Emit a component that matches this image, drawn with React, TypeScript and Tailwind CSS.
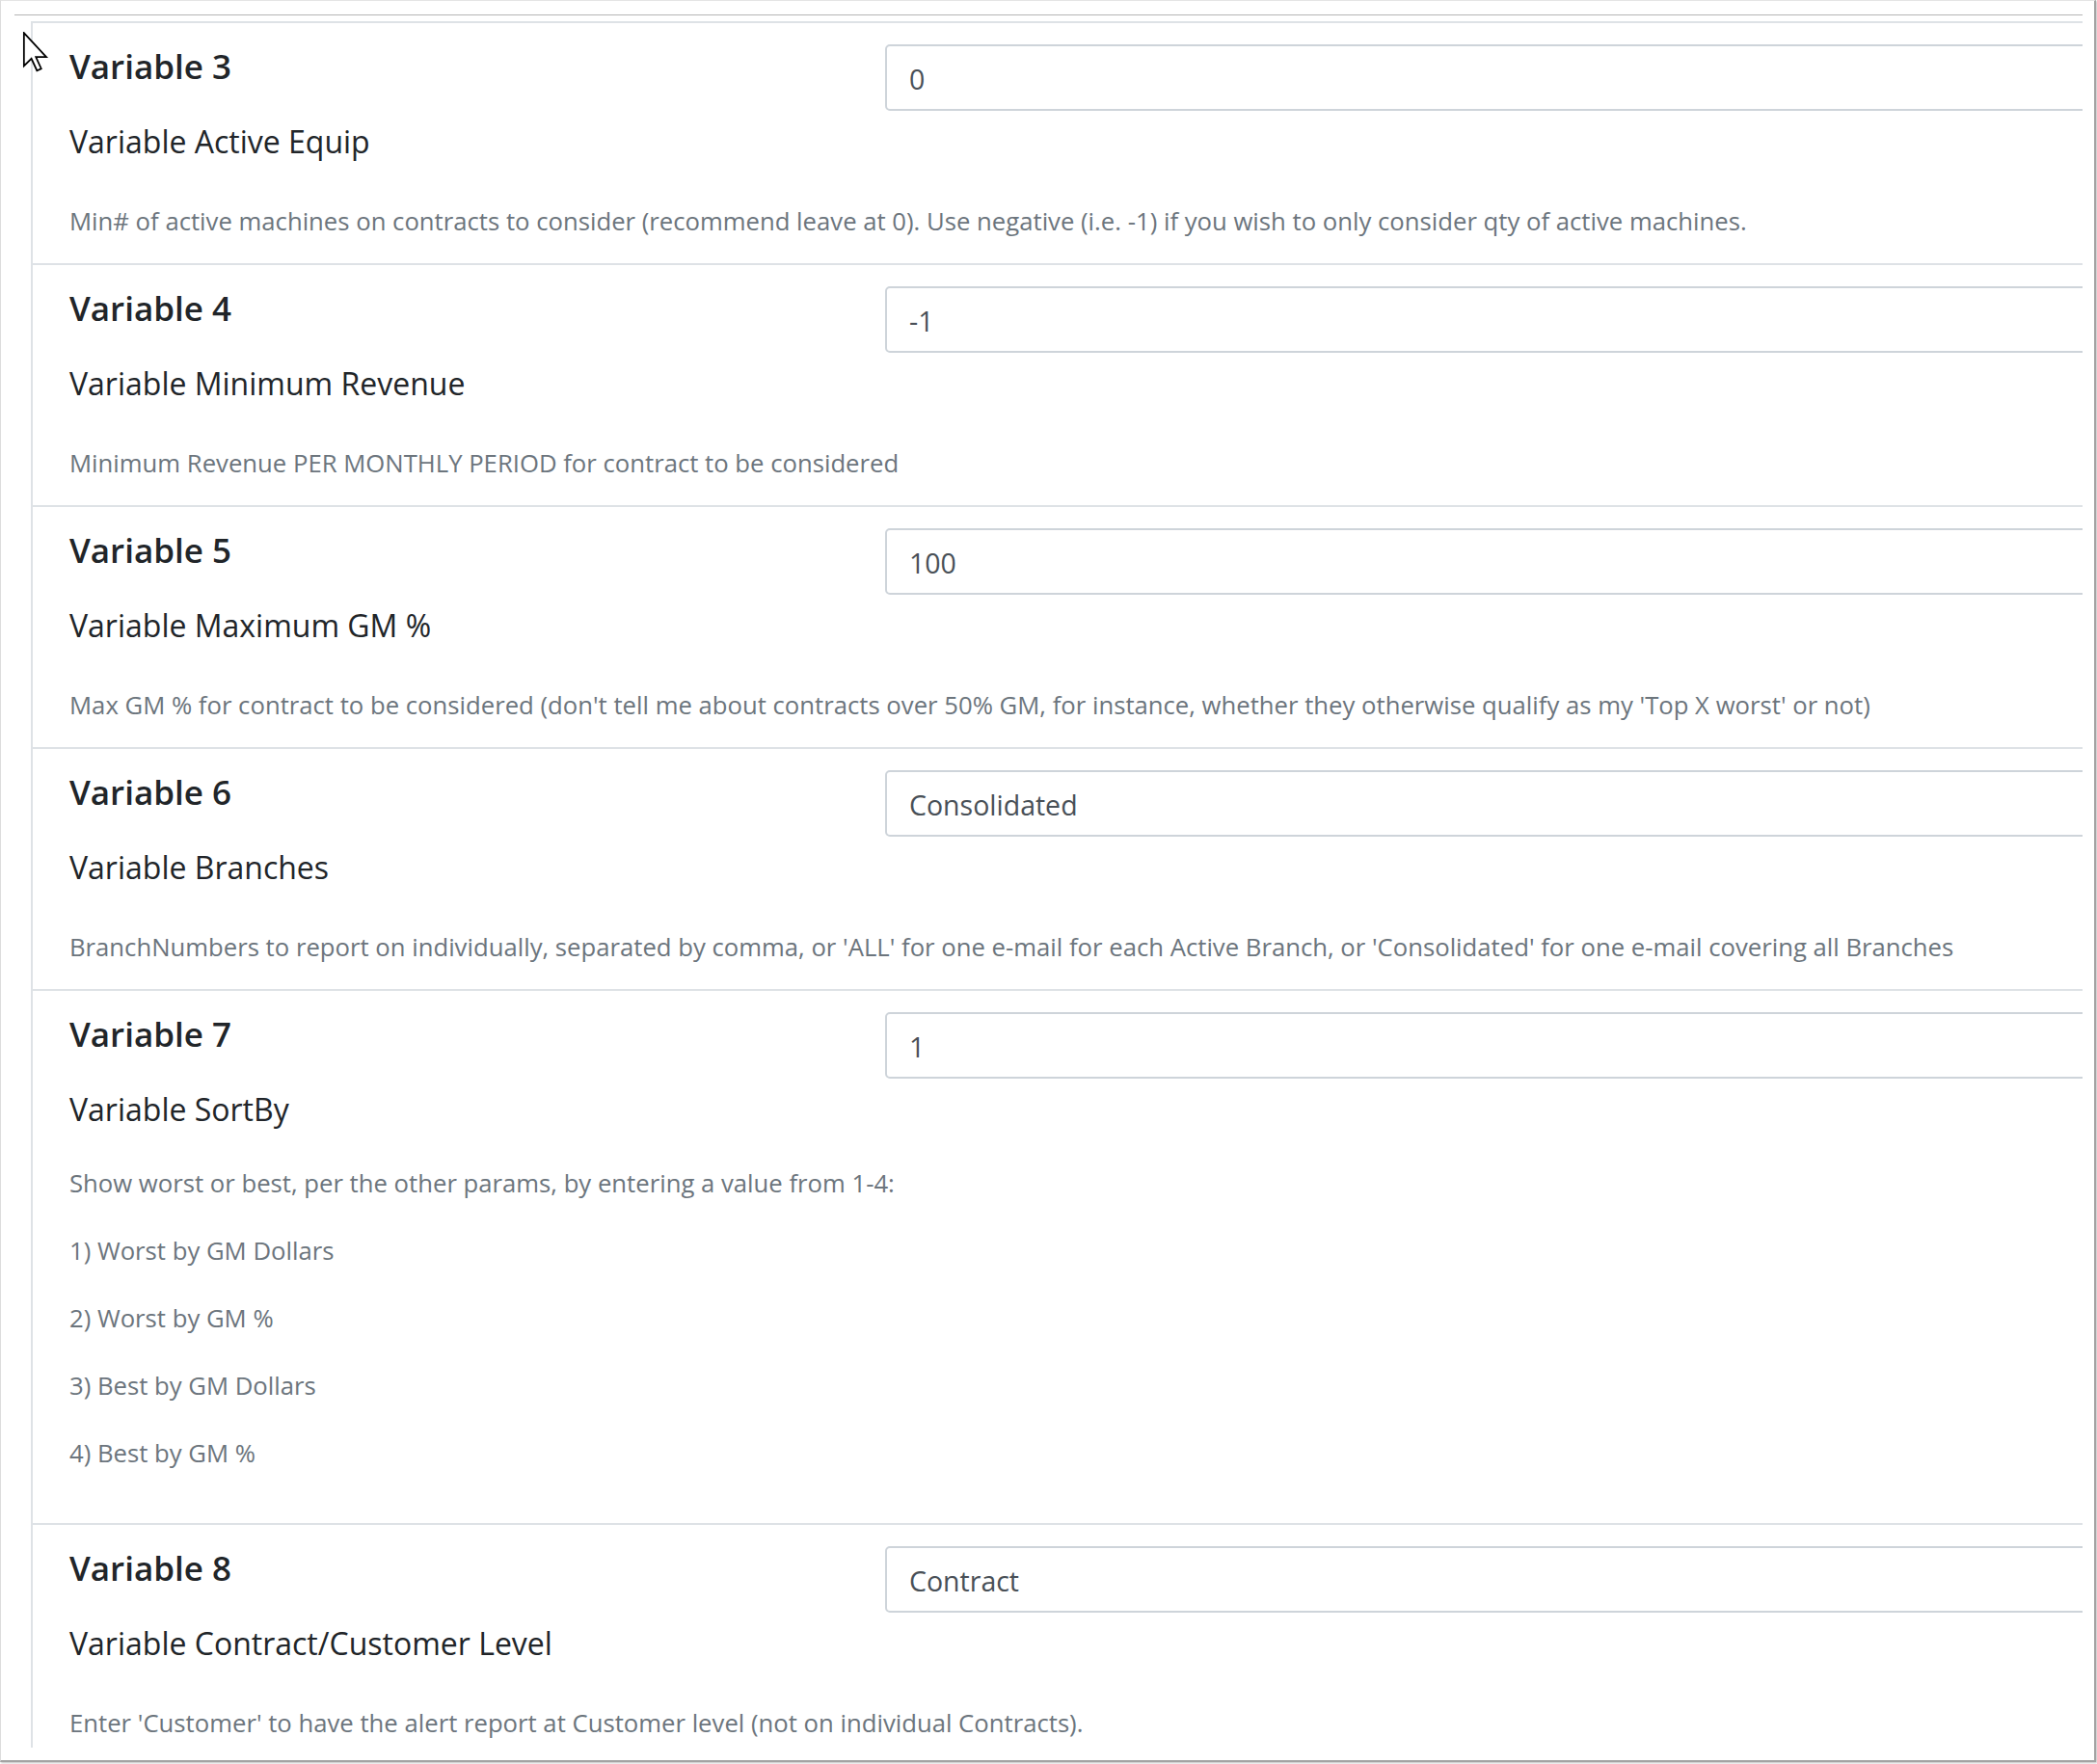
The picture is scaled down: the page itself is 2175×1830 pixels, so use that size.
import React from "react";

type Setting = {
  title: string;
  label: string;
  value: string;
  notes: string[];
};

const settings: Setting[] = [
  {
    title: "Variable 3",
    label: "Variable Active Equip",
    value: "0",
    notes: [
      "Min# of active machines on contracts to consider (recommend leave at 0). Use negative (i.e. -1) if you wish to only consider qty of active machines.",
    ],
  },
  {
    title: "Variable 4",
    label: "Variable Minimum Revenue",
    value: "-1",
    notes: ["Minimum Revenue PER MONTHLY PERIOD for contract to be considered"],
  },
  {
    title: "Variable 5",
    label: "Variable Maximum GM %",
    value: "100",
    notes: [
      "Max GM % for contract to be considered (don't tell me about contracts over 50% GM, for instance, whether they otherwise qualify as my 'Top X worst' or not)",
    ],
  },
  {
    title: "Variable 6",
    label: "Variable Branches",
    value: "Consolidated",
    notes: [
      "BranchNumbers to report on individually, separated by comma, or 'ALL' for one e-mail for each Active Branch, or 'Consolidated' for one e-mail covering all Branches",
    ],
  },
  {
    title: "Variable 7",
    label: "Variable SortBy",
    value: "1",
    notes: [
      "Show worst or best, per the other params, by entering a value from 1-4:",
      "1) Worst by GM Dollars",
      "2) Worst by GM %",
      "3) Best by GM Dollars",
      "4) Best by GM %",
    ],
  },
  {
    title: "Variable 8",
    label: "Variable Contract/Customer Level",
    value: "Contract",
    notes: [
      "Enter 'Customer' to have the alert report at Customer level (not on individual Contracts).",
    ],
  },
];

function Cursor() {
  return (
    <svg
      className="absolute left-[22px] top-[32px]"
      width="28"
      height="42"
      viewBox="0 0 12 19"
    >
      <path
        d="M0.5 0.5 L0.5 16 L4 12.6 L6.6 18.2 L8.6 17.3 L6.1 11.8 L11 11.8 Z"
        fill="#fff"
        stroke="#000"
        strokeWidth="0.8"
        strokeLinejoin="miter"
      />
    </svg>
  );
}

function SettingRow({ setting }: { setting: Setting }) {
  const multi = setting.notes.length > 1;
  return (
    <div className="border-b-2 border-[#dee2e6] pl-[38px] pt-[22px]">
      <div className="flex items-start">
        <div className="w-[846px] shrink-0">
          <h4 className="mt-[2px] text-[35px] font-semibold leading-[42px] text-[#212529]">
            {setting.title}
          </h4>
          <h5 className="mt-[39px] text-[32px] leading-[36px] text-[#212529]">
            {setting.label}
          </h5>
        </div>
        <input
          readOnly
          value={setting.value}
          className="h-[69px] w-[1300px] shrink-0 rounded-[5px] border-2 border-[#ced4da] bg-white px-[23px] pt-[2px] text-[28.5px] text-[#495057] outline-none"
        />
      </div>
      {multi ? (
        <div className="mt-[40px] pb-[21px]">
          {setting.notes.map((n) => (
            <p
              key={n}
              className="mb-[33px] text-[25.7px] leading-[37px] text-[#6c757d]"
            >
              {n}
            </p>
          ))}
        </div>
      ) : (
        <p className="mt-[46px] pb-[25px] text-[25.7px] leading-[37px] text-[#6c757d]">
          {setting.notes[0]}
        </p>
      )}
    </div>
  );
}

export default function App() {
  return (
    <div className="h-[1830px] w-[2175px] bg-white font-['Open_Sans',sans-serif]">
      <div className="relative h-[1828px] w-[2174px] border-b-2 border-l border-r-2 border-t border-b-[#a3a3a3] border-l-[#dcdcdc] border-r-[#a3a3a3] border-t-[#e4e4e4] pl-[14px] pt-[14px] shadow-[1px_1px_2px_rgba(0,0,0,0.25)]">
        <div className="h-[1798px] w-[2145px] overflow-hidden border-t border-[#b5b5b5]">
          <div className="ml-[17px] mt-[6px] w-[2300px] border-l-2 border-t-2 border-[#dee2e6]">
            {settings.map((s) => (
              <SettingRow key={s.title} setting={s} />
            ))}
          </div>
        </div>
        <Cursor />
      </div>
    </div>
  );
}
